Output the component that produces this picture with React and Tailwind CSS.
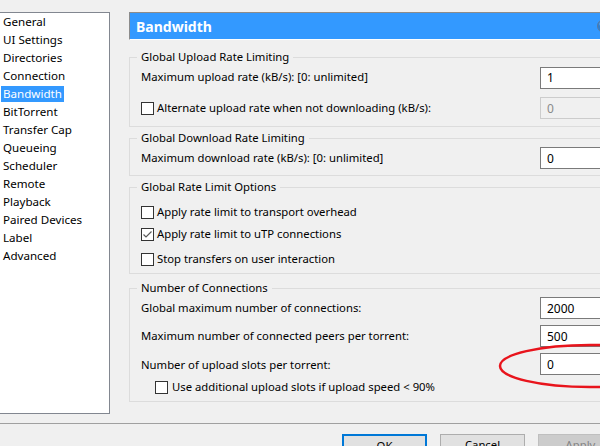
import React from "react";

const pages = [
  "General",
  "UI Settings",
  "Directories",
  "Connection",
  "Bandwidth",
  "BitTorrent",
  "Transfer Cap",
  "Queueing",
  "Scheduler",
  "Remote",
  "Playback",
  "Paired Devices",
  "Label",
  "Advanced",
];

function CheckBox({ checked }) {
  return (
    <span className="w-[13px] h-[13px] shrink-0 border border-[#333333] bg-white flex items-center justify-center">
      {checked && (
        <svg width="11" height="11" viewBox="0 0 11 11">
          <path d="M1.5 5.5 L4 8 L9.5 2.5" fill="none" stroke="#5a5a5a" strokeWidth="1.2" />
        </svg>
      )}
    </span>
  );
}

function NumBox({ value, disabled }) {
  return (
    <input
      readOnly
      value={value}
      className={
        disabled
          ? "w-[80px] h-[22px] shrink-0 border border-[#cccccc] bg-[#f0f0f0] pl-[6px] text-[12px] text-[#8a8a8a] outline-none"
          : "w-[80px] h-[22px] shrink-0 border border-[#7a7a7a] bg-white pl-[6px] text-[12px] text-black outline-none"
      }
    />
  );
}

function Group({ title, className, children }) {
  return (
    <fieldset className={"border border-[#dcdcdc] pl-[11px] pr-[8px] " + className}>
      <legend className="leading-[16px] px-[4px] -ml-[4px]">{title}</legend>
      {children}
    </fieldset>
  );
}

function CheckRow({ label, checked, className }) {
  return (
    <div className={"flex items-center gap-[3px] h-[22px] " + (className || "")}>
      <CheckBox checked={checked} />
      <span>{label}</span>
    </div>
  );
}

export default function App() {
  return (
    <div
      className="w-[600px] h-[446px] overflow-hidden bg-[#f0f0f0] text-[11.3px] text-black"
      style={{ fontFamily: '"Noto Sans", "Liberation Sans", sans-serif' }}
    >
      <div className="flex h-[423px] pt-[12px]">
        {/* page list */}
        <div className="w-[110px] h-[402px] shrink-0 bg-white border-t border-r border-b border-[#828790] pl-[1px] text-[11.6px]">
          {pages.map((p) => (
            <div key={p} className="h-[18px] leading-[18px]">
              <span className={p === "Bandwidth" ? "px-[2px] pb-[1px] bg-[#3399ff] text-white" : "px-[2px]"}>{p}</span>
            </div>
          ))}
        </div>

        {/* settings panel */}
        <div className="ml-[19px] w-[500px] shrink-0 relative">
          <div className="h-[28px] flex items-center bg-[#3399ff] border-t border-l border-[#8c8c8c] border-b border-b-white pl-[6px]">
            <span className="text-white font-bold text-[14px]">Bandwidth</span>
            <svg className="ml-auto mr-[18px]" width="14" height="14" viewBox="0 0 14 14">
              <circle cx="7" cy="7" r="6.5" fill="#2f7fd0" stroke="#5a7aa0" />
              <circle cx="5" cy="5" r="2.5" fill="#7fb8ee" />
            </svg>
          </div>

          <Group title="Global Upload Rate Limiting" className="mt-[9px] pb-[7px]">
            <div className="mt-[1px] h-[23px] flex items-center justify-between">
              <span>Maximum upload rate (kB/s): [0: unlimited]</span>
              <NumBox value="1" />
            </div>
            <div className="mt-[8px] h-[22px] flex items-center justify-between">
              <div className="flex items-center gap-[3px]">
                <CheckBox />
                <span>Alternate upload rate when not downloading (kB/s):</span>
              </div>
              <NumBox value="0" disabled />
            </div>
          </Group>

          <Group title="Global Download Rate Limiting" className="mt-[3px] pb-[6px]">
            <div className="mt-[1px] h-[22px] flex items-center justify-between">
              <span>Maximum download rate (kB/s): [0: unlimited]</span>
              <NumBox value="0" />
            </div>
          </Group>

          <Group title="Global Rate Limit Options" className="mt-[3px] pt-[6px] pb-[3px]">
            <CheckRow label="Apply rate limit to transport overhead" />
            <CheckRow label="Apply rate limit to uTP connections" checked />
            <CheckRow label="Stop transfers on user interaction" className="mt-[3px]" />
          </Group>

          <Group title="Number of Connections" className="mt-[6px] pb-[7px]">
            <div className="mt-[1px] h-[22px] flex items-center justify-between">
              <span>Global maximum number of connections:</span>
              <NumBox value="2000" />
            </div>
            <div className="mt-[6px] h-[22px] flex items-center justify-between">
              <span>Maximum number of connected peers per torrent:</span>
              <NumBox value="500" />
            </div>
            <div className="mt-[6px] h-[22px] flex items-center justify-between">
              <span className="pt-[2px]">Number of upload slots per torrent:</span>
              <NumBox value="0" />
            </div>
            <div className="mt-[5px] h-[14px] flex items-center gap-[4px] ml-[14px]">
              <CheckBox />
              <span>Use additional upload slots if upload speed &lt; 90%</span>
            </div>
          </Group>

          {/* red annotation ring */}
          <svg className="absolute left-[369px] top-[330px] pointer-events-none" width="190" height="50" viewBox="0 0 190 50">
            <ellipse cx="92" cy="24" rx="90" ry="21" fill="none" stroke="#e8141c" strokeWidth="2.5" />
          </svg>
        </div>
      </div>

      <div className="h-[1px] bg-[#a0a0a0]" />

      <div className="flex gap-[13px] pl-[342px] pt-[10px]">
        <button className="w-[85px] h-[23px] shrink-0 bg-[#e1e1e1] border-2 border-[#0078d7] leading-[19px]">OK</button>
        <button className="w-[85px] h-[23px] shrink-0 bg-[#e1e1e1] border border-[#adadad]">Cancel</button>
        <button className="w-[85px] h-[23px] shrink-0 bg-[#cccccc] border border-[#bfbfbf] text-[#838383]">Apply</button>
      </div>
    </div>
  );
}
